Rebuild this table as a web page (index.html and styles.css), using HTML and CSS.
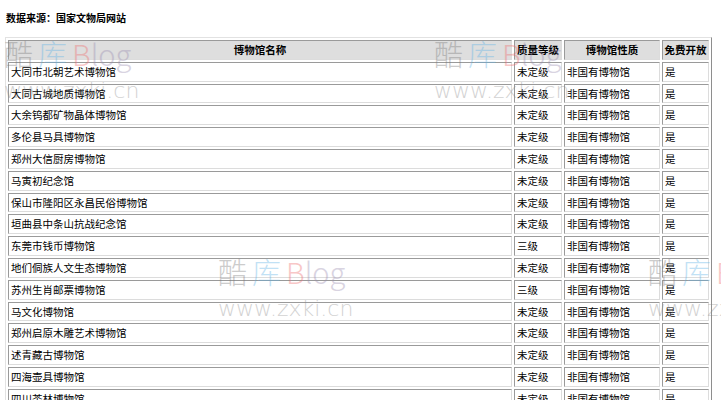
FILE: index.html
```html
<!DOCTYPE html>
<html lang="zh-CN">
<head>
<meta charset="utf-8">
<link rel="stylesheet" href="styles.css">
</head>
<body>
<div class="page">
  <div class="source">数据来源：国家文物局网站</div>
  <table class="museums">
    <thead>
      <tr>
        <th class="c1">博物馆名称</th>
        <th class="c2">质量等级</th>
        <th class="c3">博物馆性质</th>
        <th class="c4">免费开放</th>
      </tr>
    </thead>
    <tbody>
      <tr><td>大同市北朝艺术博物馆</td><td>未定级</td><td>非国有博物馆</td><td>是</td></tr>
      <tr><td>大同古城地质博物馆</td><td>未定级</td><td>非国有博物馆</td><td>是</td></tr>
      <tr><td>大余钨都矿物晶体博物馆</td><td>未定级</td><td>非国有博物馆</td><td>是</td></tr>
      <tr><td>多伦县马具博物馆</td><td>未定级</td><td>非国有博物馆</td><td>是</td></tr>
      <tr><td>郑州大信厨房博物馆</td><td>未定级</td><td>非国有博物馆</td><td>是</td></tr>
      <tr><td>马寅初纪念馆</td><td>未定级</td><td>非国有博物馆</td><td>是</td></tr>
      <tr><td>保山市隆阳区永昌民俗博物馆</td><td>未定级</td><td>非国有博物馆</td><td>是</td></tr>
      <tr><td>垣曲县中条山抗战纪念馆</td><td>未定级</td><td>非国有博物馆</td><td>是</td></tr>
      <tr><td>东莞市钱币博物馆</td><td>三级</td><td>非国有博物馆</td><td>是</td></tr>
      <tr><td>地们侗族人文生态博物馆</td><td>未定级</td><td>非国有博物馆</td><td>是</td></tr>
      <tr><td>苏州生肖邮票博物馆</td><td>三级</td><td>非国有博物馆</td><td>是</td></tr>
      <tr><td>马文化博物馆</td><td>未定级</td><td>非国有博物馆</td><td>是</td></tr>
      <tr><td>郑州启原木雕艺术博物馆</td><td>未定级</td><td>非国有博物馆</td><td>是</td></tr>
      <tr><td>述青藏古博物馆</td><td>未定级</td><td>非国有博物馆</td><td>是</td></tr>
      <tr><td>四海壶具博物馆</td><td>未定级</td><td>非国有博物馆</td><td>是</td></tr>
      <tr><td>四川茶林博物馆</td><td>未定级</td><td>非国有博物馆</td><td>是</td></tr>
    </tbody>
  </table>

  <div class="wm wm1"><div class="wm-logo"><span class="k1">酷</span><span class="k2">库</span><span class="k3">B</span><span class="k4">log</span></div><div class="wm-url">www.zxki.cn</div></div>
  <div class="wm wm2"><div class="wm-logo"><span class="k1">酷</span><span class="k2">库</span><span class="k3">B</span><span class="k4">log</span></div><div class="wm-url">www.zxki.cn</div></div>
  <div class="wm wm3"><div class="wm-logo"><span class="k1">酷</span><span class="k2">库</span><span class="k3">B</span><span class="k4">log</span></div><div class="wm-url">www.zxki.cn</div></div>
  <div class="wm wm4"><div class="wm-logo"><span class="k1">酷</span><span class="k2">库</span><span class="k3">B</span><span class="k4">log</span></div><div class="wm-url">www.zxki.cn</div></div>
</div>
</body>
</html>
```
FILE: styles.css
```css
html, body {
  margin: 0;
  padding: 0;
  background: #fff;
}
body {
  font-family: "Noto Sans CJK SC", "Noto Sans", sans-serif;
  font-size: 10.5px;
  color: #000;
}
.page {
  position: relative;
  padding: 9px 5px 0 5px;
  overflow: hidden;
  height: 391px;
}
.source {
  font-weight: bold;
  font-size: 10px;
  line-height: 17px;
  margin-left: 1px;
  margin-bottom: 11px;
}
.museums {
  width: 707px;
  table-layout: fixed;
  border-collapse: separate;
  border-spacing: 2px;
  border: 1px solid;
  border-color: #e2e2e2 #8e8e8e #8e8e8e #e2e2e2;
}
.museums th,
.museums td {
  box-sizing: border-box;
  border: 1px solid;
  border-color: #9a9a9a #dcdcdc #dcdcdc #9a9a9a;
  padding: 1px 2px;
  line-height: 15.8px;
  white-space: nowrap;
  overflow: hidden;
}
.museums th {
  background: #dedede;
  font-weight: bold;
  text-align: center;
  padding: 1px 0;
}
.museums td {
  text-align: left;
}
.c1 { width: 504px; }
.c2 { width: 48px; }
.c3 { width: 96px; }
.c4 { width: 47px; }

.wm {
  position: absolute;
  pointer-events: none;
  opacity: 0.38;
  width: 140px;
}
.wm-logo {
  font-family: "Noto Sans CJK SC", "DejaVu Sans", sans-serif;
  font-weight: 300;
  font-size: 29px;
  line-height: 32px;
  white-space: nowrap;
}
.k1 { color: #7a7a7a; }
.k2 { color: #5fb2e6; margin-left: 5px; }
.k3 { color: #ee6f6f; margin-left: 5px; }
.k4 { color: #9c8fb2; }
.wm-url {
  font-family: "DejaVu Sans", sans-serif;
  font-weight: 300;
  font-size: 22px;
  line-height: 24px;
  color: #8a8a8a;
  margin-top: 10px;
  white-space: nowrap;
}
.wm1 { left: 4px; top: 37px; }
.wm2 { left: 434px; top: 37px; }
.wm3 { left: 218px; top: 255px; }
.wm4 { left: 648px; top: 255px; }
```
